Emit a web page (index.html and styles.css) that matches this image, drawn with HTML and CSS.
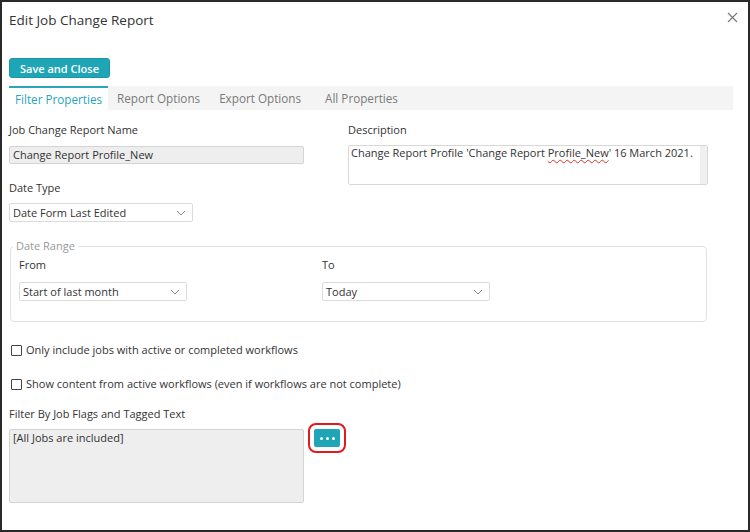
FILE: index.html
```html
<!DOCTYPE html>
<html lang="en">
<head>
    <meta charset="UTF-8">
    <title>Edit Job Change Report</title>
    <link rel="stylesheet" href="styles.css">
</head>
<body>

<div class="dialog">
    <div class="dialog-header">
        <h2>Edit Job Change Report</h2>
        <svg class="close" width="11" height="11" viewBox="0 0 11 11">
            <path d="M1 1L10 10M10 1L1 10" stroke="#7a7a7a" stroke-width="1.2" fill="none"/>
        </svg>
    </div>

    <button type="button" class="btn">Save and Close</button>

    <div class="tabs">
        <div class="tab active">Filter Properties</div>
        <div class="tab">Report Options</div>
        <div class="tab">Export Options</div>
        <div class="tab tab-last">All Properties</div>
    </div>

    <div class="top-grid">
        <div class="col-left">
            <label>Job Change Report Name</label>
            <div class="input readonly">Change Report Profile_New</div>
            <label class="gap-label">Date Type</label>
            <div class="select select-type">
                <span>Date Form Last Edited</span>
                <svg width="10" height="6" viewBox="0 0 10 6"><path d="M1 1L5 5L9 1" stroke="#888" fill="none"/></svg>
            </div>
        </div>
        <div class="col-right">
            <label>Description</label>
            <div class="textarea">
                <div class="textarea-text">Change Report Profile 'Change Report <span class="spell">Profile_New</span>' 16 March 2021.</div>
                <div class="scroll"></div>
            </div>
        </div>
    </div>

    <fieldset class="range">
        <legend>Date Range</legend>
        <div class="range-cols">
            <div class="range-col">
                <label>From</label>
                <div class="select select-range">
                    <span>Start of last month</span>
                    <svg width="10" height="6" viewBox="0 0 10 6"><path d="M1 1L5 5L9 1" stroke="#888" fill="none"/></svg>
                </div>
            </div>
            <div class="range-col">
                <label>To</label>
                <div class="select select-range">
                    <span>Today</span>
                    <svg width="10" height="6" viewBox="0 0 10 6"><path d="M1 1L5 5L9 1" stroke="#888" fill="none"/></svg>
                </div>
            </div>
        </div>
    </fieldset>

    <div class="check-row first">
        <span class="checkbox"></span>
        <span>Only include jobs with active or completed workflows</span>
    </div>
    <div class="check-row">
        <span class="checkbox"></span>
        <span>Show content from active workflows (even if workflows are not complete)</span>
    </div>

    <label class="filter-label">Filter By Job Flags and Tagged Text</label>
    <div class="filter-row">
        <div class="filter-box">[All Jobs are included]</div>
        <button type="button" class="btn-more">
            <span></span><span></span><span></span>
        </button>
    </div>
</div>

</body>
</html>
```

FILE: styles.css
```css
body {
    margin: 0;
    font-family: 'Open Sans', 'Noto Sans', sans-serif;
    font-size: 11px;
    color: #333;
    background: #fff;
}
.dialog {
    width: 750px;
    height: 532px;
    box-sizing: border-box;
    border: 2px solid #2a2a2a;
    padding: 0 15px 0 7px;
}
.dialog-header {
    display: flex;
    justify-content: space-between;
    align-items: center;
    margin-top: 8px;
    height: 20px;
}
.dialog-header h2 {
    margin: 0;
    font-size: 13.5px;
    font-weight: 400;
    color: #333;
}
.close {
    margin-right: -5px;
    margin-top: -6px;
}
.btn {
    display: block;
    margin-top: 28px;
    height: 20px;
    width: 101px;
    padding: 0;
    background-color: #1fa6b6;
    border: 1px solid #1a98a8;
    border-radius: 3px;
    color: #fff;
    font-family: inherit;
    font-size: 11px;
    font-weight: 600;
    cursor: pointer;
}
.tabs {
    display: flex;
    margin-top: 8px;
    height: 24px;
    background: #f4f4f4;
    white-space: nowrap;
}
.tab {
    padding: 0 9px;
    line-height: 24px;
    font-size: 11.7px;
    color: #7a7a7a;
}
.tab.active {
    padding: 0 6px;
    background: #fff;
    color: #2aa5ba;
    border-top: 2px solid #2aa5ba;
    line-height: 22px;
}
.tab:nth-child(3) {
    margin-left: 1px;
}
.tab-last {
    margin-left: 6px;
}
label {
    display: block;
    line-height: 16px;
}
.top-grid {
    display: grid;
    grid-template-columns: 295px 360px;
    column-gap: 44px;
    margin-top: 12px;
}
.input {
    margin-top: 8px;
    height: 18px;
    box-sizing: border-box;
    border: 1px solid #d4d4d4;
    border-radius: 2px;
    padding: 0 3px;
    line-height: 16px;
}
.readonly {
    background: #eeeeee;
}
.gap-label {
    margin-top: 16px;
}
.select {
    display: flex;
    justify-content: space-between;
    align-items: center;
    height: 19px;
    box-sizing: border-box;
    border: 1px solid #dcdcdc;
    border-radius: 2px;
    padding: 0 6px 0 3px;
    background: #fff;
}
.select-type {
    margin-top: 7px;
    width: 184px;
}
.select-range {
    margin-top: 9px;
    width: 168px;
}
.col-right .textarea {
    margin-top: 7px;
}
.textarea {
    display: flex;
    height: 40px;
    box-sizing: border-box;
    border: 1px solid #d8d8d8;
    border-radius: 2px;
}
.textarea-text {
    flex: 1;
    padding: 0 2px;
    line-height: 14px;
}
.spell {
    text-decoration: underline wavy #e03030;
    text-decoration-thickness: 1px;
    text-underline-offset: 2px;
}
.scroll {
    width: 7px;
    background: #f0f0f0;
}
.range {
    margin: 17px 0 0 1px;
    width: 697px;
    box-sizing: border-box;
    border: 1px solid #dde3e7;
    border-radius: 4px;
    padding: 4px 8px 20px 8px;
}
.range legend {
    margin-left: -6px;
    padding: 0 3px;
    line-height: 14px;
    color: #999;
}
.range-cols {
    display: grid;
    grid-template-columns: 303px 1fr;
}
.check-row {
    display: flex;
    align-items: center;
    gap: 4px;
    margin-top: 18px;
    margin-left: 2px;
    line-height: 16px;
}
.check-row.first {
    margin-top: 20px;
}
.checkbox {
    width: 9px;
    height: 9px;
    border: 1px solid #444;
    border-radius: 1px;
}
.filter-label {
    margin-top: 14px;
}
.filter-row {
    display: flex;
    align-items: flex-start;
    gap: 10px;
    margin-top: 7px;
}
.filter-box {
    width: 295px;
    height: 74px;
    box-sizing: border-box;
    background: #eeeeee;
    border: 1px solid #d4d4d4;
    border-radius: 2px;
    padding: 1px 3px;
    line-height: 14px;
}
.btn-more {
    display: flex;
    justify-content: center;
    align-items: center;
    gap: 3px;
    width: 26px;
    height: 18px;
    padding: 0;
    background: #1fa6b6;
    border: none;
    border-radius: 2px;
    outline: 2px solid #e01b1b;
    outline-offset: 4px;
    cursor: pointer;
}
.btn-more span {
    width: 3px;
    height: 3px;
    border-radius: 50%;
    background: #fff;
}
```
